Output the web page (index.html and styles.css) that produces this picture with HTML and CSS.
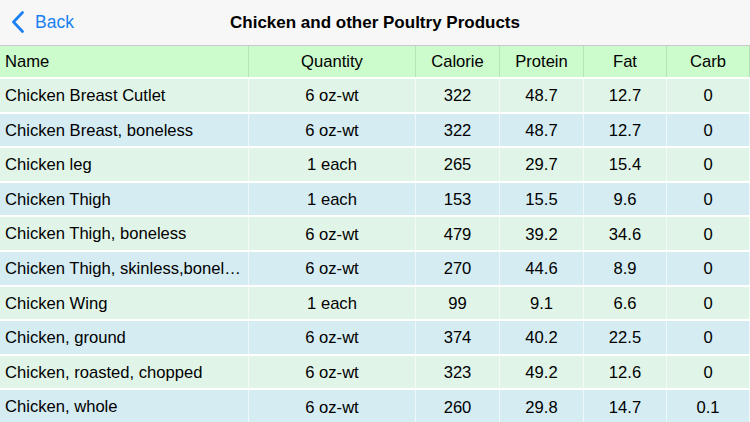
FILE: index.html
```html
<!DOCTYPE html>
<html>
<head>
<meta charset="utf-8">
<link rel="stylesheet" href="styles.css">
</head>
<body>
<div class="nav">
  <div class="back">
    <svg class="chev" width="14" height="22" viewBox="0 0 14 22"><path d="M11.5 1.5 L2.5 11 L11.5 20.5" fill="none" stroke="#1a7ff0" stroke-width="2.7" stroke-linecap="round" stroke-linejoin="round"/></svg>
    <span>Back</span>
  </div>
  <div class="title">Chicken and other Poultry Products</div>
</div>
<div class="table">
  <div class="row head">
    <div class="c name">Name</div><div class="c q">Quantity</div><div class="c n1">Calorie</div><div class="c n1">Protein</div><div class="c n2">Fat</div><div class="c n2">Carb</div>
  </div>
  <div class="row g"><div class="c name">Chicken Breast Cutlet</div><div class="c q">6 oz-wt</div><div class="c n1">322</div><div class="c n1">48.7</div><div class="c n2">12.7</div><div class="c n2">0</div></div>
  <div class="row b"><div class="c name">Chicken Breast, boneless</div><div class="c q">6 oz-wt</div><div class="c n1">322</div><div class="c n1">48.7</div><div class="c n2">12.7</div><div class="c n2">0</div></div>
  <div class="row g"><div class="c name">Chicken leg</div><div class="c q">1 each</div><div class="c n1">265</div><div class="c n1">29.7</div><div class="c n2">15.4</div><div class="c n2">0</div></div>
  <div class="row b"><div class="c name">Chicken Thigh</div><div class="c q">1 each</div><div class="c n1">153</div><div class="c n1">15.5</div><div class="c n2">9.6</div><div class="c n2">0</div></div>
  <div class="row g"><div class="c name">Chicken Thigh, boneless</div><div class="c q">6 oz-wt</div><div class="c n1">479</div><div class="c n1">39.2</div><div class="c n2">34.6</div><div class="c n2">0</div></div>
  <div class="row b"><div class="c name">Chicken Thigh, skinless,boneless</div><div class="c q">6 oz-wt</div><div class="c n1">270</div><div class="c n1">44.6</div><div class="c n2">8.9</div><div class="c n2">0</div></div>
  <div class="row g"><div class="c name">Chicken Wing</div><div class="c q">1 each</div><div class="c n1">99</div><div class="c n1">9.1</div><div class="c n2">6.6</div><div class="c n2">0</div></div>
  <div class="row b"><div class="c name">Chicken, ground</div><div class="c q">6 oz-wt</div><div class="c n1">374</div><div class="c n1">40.2</div><div class="c n2">22.5</div><div class="c n2">0</div></div>
  <div class="row g"><div class="c name">Chicken, roasted, chopped</div><div class="c q">6 oz-wt</div><div class="c n1">323</div><div class="c n1">49.2</div><div class="c n2">12.6</div><div class="c n2">0</div></div>
  <div class="row b"><div class="c name">Chicken, whole</div><div class="c q">6 oz-wt</div><div class="c n1">260</div><div class="c n1">29.8</div><div class="c n2">14.7</div><div class="c n2">0.1</div></div>
</div>
</body>
</html>
```

FILE: styles.css
```css
html, body {
  margin: 0;
  padding: 0;
  background: #ffffff;
  font-family: "Liberation Sans", Arial, sans-serif;
  color: #000;
  overflow: hidden;
}
.nav {
  height: 45px;
  background: #f7f7f7;
  border-bottom: 1px solid #c9c9cb;
  display: flex;
  align-items: center;
  justify-content: center;
  position: relative;
}
.back {
  position: absolute;
  left: 11px;
  top: 11px;
  display: flex;
  align-items: center;
  gap: 10px;
  color: #1a7ff0;
  font-size: 17.5px;
}
.title {
  font-size: 17px;
  font-weight: bold;
}
.table {
  display: flex;
  flex-direction: column;
  gap: 2px;
}
.row {
  display: flex;
  height: 32.6px;
  font-size: 16.6px;
}
.row.head {
  height: 31px;
  background: #ccfbcc;
}
.row.g { background: #e0f5e8; }
.row.b { background: #d4ecf2; }
.c {
  box-sizing: border-box;
  display: flex;
  align-items: center;
  justify-content: center;
  border-right: 1px solid rgba(255,255,255,0.6);
  white-space: nowrap;
  overflow: hidden;
  padding-top: 2px;
}
.head .c { border-right-color: #b6e4b6; padding-top: 0; }
.c.name {
  width: 249px;
  padding-left: 5px;
  padding-right: 1px;
  display: block;
  line-height: 32.6px;
  padding-top: 1px;
  text-overflow: ellipsis;
}
.head .c.name { line-height: 31px; padding-top: 0; }
.c.q { width: 167px; }
.c.n1 { width: 84px; }
.c.n2 { width: 83px; }
```
